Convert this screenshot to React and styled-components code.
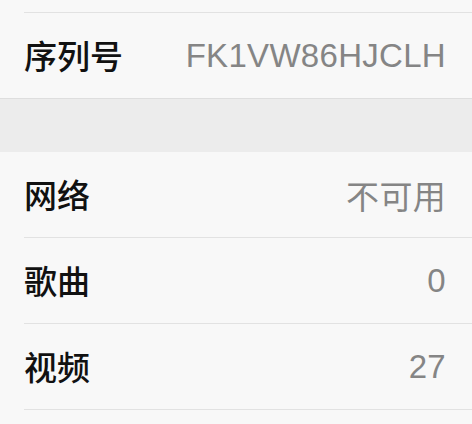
import styled, { createGlobalStyle } from 'styled-components';

const Global = createGlobalStyle`
  html, body {
    margin: 0;
    padding: 0;
    background: #f8f8f8;
  }
  body {
    font-family: "Liberation Sans", "Noto Sans CJK SC", sans-serif;
    -webkit-font-smoothing: antialiased;
  }
`;

const Page = styled.div`
  width: 472px;
  height: 424px;
  overflow: hidden;
  background: #f8f8f8;
`;

const Group = styled.div`
  background: #f8f8f8;
  padding-left: 24px;
  border-bottom: ${(p) => (p.$bordered ? '1px solid #dedede' : 'none')};
`;

const TopCap = styled.div`
  height: 12px;
`;

const Row = styled.div`
  display: flex;
  align-items: center;
  justify-content: space-between;
  height: 85px;
  padding-right: 26px;
  border-top: ${(p) => (p.$first ? 'none' : '1px solid #e2e2e2')};
`;

const Label = styled.span`
  font-family: "Noto Sans CJK SC", sans-serif;
  font-size: 33px;
  font-weight: 500;
  color: #111111;
  margin-top: -2px;
`;

const Value = styled.span`
  font-family: "Liberation Sans", "Noto Sans CJK SC", sans-serif;
  font-size: 33px;
  color: #858585;
  letter-spacing: 0.3px;
`;

const Spacer = styled.div`
  height: 53px;
  background: #ececec;
`;

const Line = styled.div`
  border-top: 1px solid #e2e2e2;
`;

export default function App() {
  return (
    <Page>
      <Global />
      <Group $bordered>
        <TopCap />
        <Row>
          <Label>序列号</Label>
          <Value>FK1VW86HJCLH</Value>
        </Row>
      </Group>
      <Spacer />
      <Group>
        <Row $first>
          <Label>网络</Label>
          <Value>不可用</Value>
        </Row>
        <Row>
          <Label>歌曲</Label>
          <Value>0</Value>
        </Row>
        <Row>
          <Label>视频</Label>
          <Value>27</Value>
        </Row>
        <Line />
      </Group>
    </Page>
  );
}
